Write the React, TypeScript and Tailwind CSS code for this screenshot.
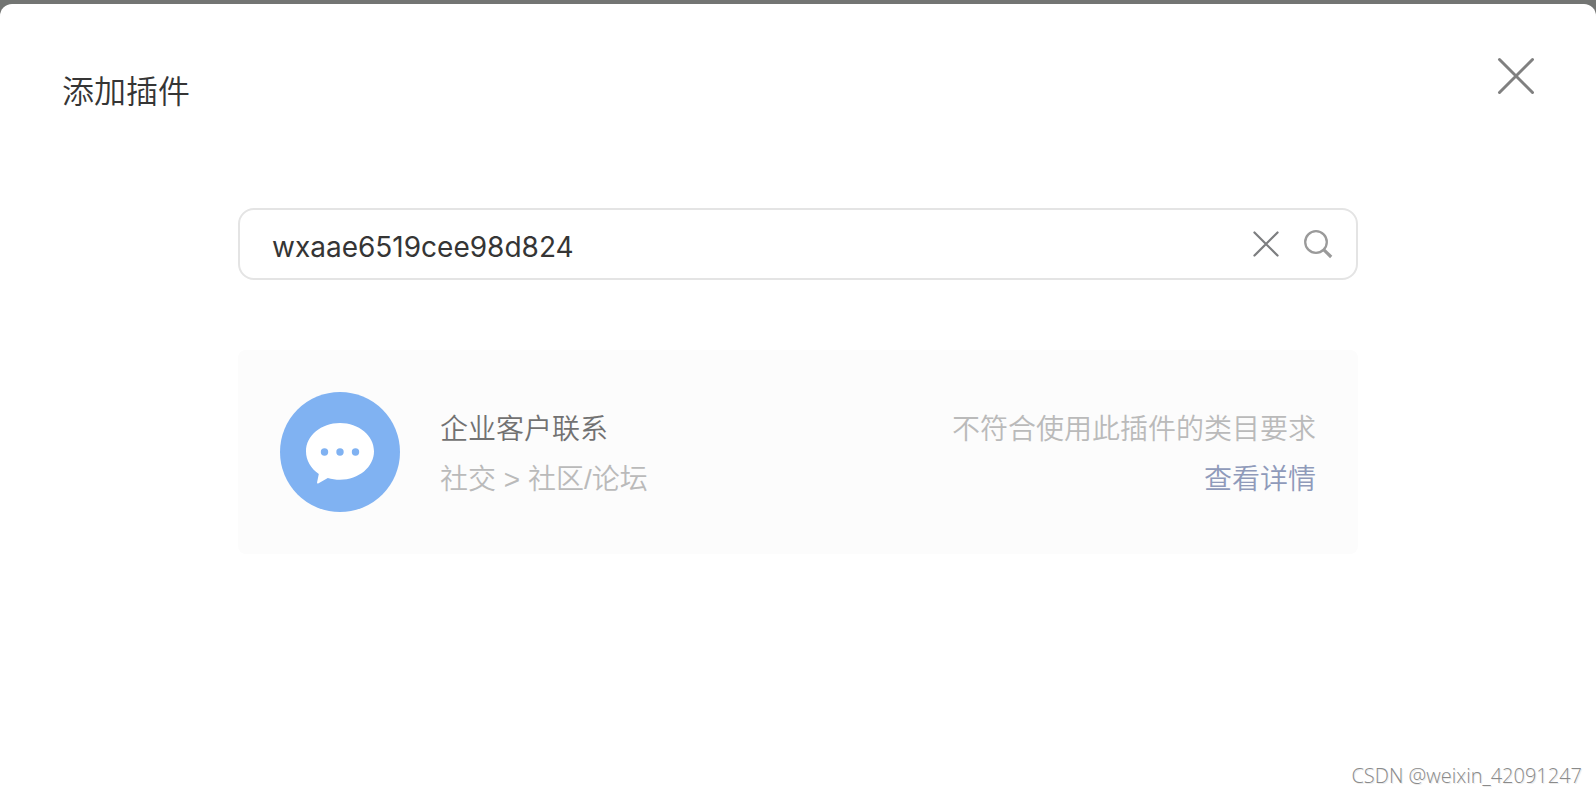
import React, { useState } from 'react';

interface Plugin {
  name: string;
  category: string;
  reason: string;
}

const plugin: Plugin = {
  name: '企业客户联系',
  category: '社交 > 社区/论坛',
  reason: '不符合使用此插件的类目要求'
};

const CloseIcon: React.FC<{ className?: string; strokeWidth: number }> = ({ className, strokeWidth }) => (
  <svg className={className} viewBox="0 0 40 40" fill="none" stroke="currentColor" strokeWidth={strokeWidth} strokeLinecap="round" aria-hidden="true">
    <path d="M3.5 3.5 36.5 36.5M36.5 3.5 3.5 36.5" />
  </svg>
);

const SearchIcon = () => (
  <svg className="size-8" viewBox="0 0 32 32" fill="none" stroke="currentColor" aria-hidden="true">
    <circle cx="14" cy="14" r="10.8" strokeWidth="2.3" />
    <path d="m21.6 21.6 7.6 7.4" strokeWidth="3.2" />
  </svg>
);

const PluginLogo = () => (
  <svg className="size-30 shrink-0" viewBox="0 0 120 120" aria-hidden="true">
    <circle cx="60" cy="60" r="60" fill="#80b2f2" />
    <path
      fill="#fff"
      d="M60 31c18.8 0 34 12.6 34 28.3S78.8 87.8 60 87.8c-4.3 0-8.4-.6-12.2-1.8L38.6 91.2c-1 .6-1.7.1-1.5-1l1.7-8.3C30.9 76.7 26 68.5 26 59.3 26 43.6 41.2 31 60 31Z"
    />
    <g fill="#80b2f2">
      <circle cx="44.5" cy="60" r="3.7" />
      <circle cx="60" cy="60" r="3.7" />
      <circle cx="75.5" cy="60" r="3.7" />
    </g>
  </svg>
);

const SearchBox = () => {
  const [keyword, setKeyword] = useState('wxaae6519cee98d824');

  return (
    <form
      className="flex h-18 items-center rounded-2xl border-2 border-[#e4e4e4] pl-8 pr-[22px]"
      onSubmit={(e) => e.preventDefault()}
    >
      <input
        type="text"
        aria-label="搜索插件"
        value={keyword}
        onChange={(e) => setKeyword(e.target.value)}
        className="min-w-0 flex-1 bg-transparent pt-[6px] font-['Inter','Noto_Sans_CJK_SC',sans-serif] text-[28px] font-normal text-[#353535] outline-none"
      />
      <button type="button" aria-label="清空" onClick={() => setKeyword('')} className="mr-[22px] text-[#7d7e80]">
        <CloseIcon className="size-7" strokeWidth={3.2} />
      </button>
      <button type="submit" aria-label="搜索" className="text-[#9a9a9a]">
        <SearchIcon />
      </button>
    </form>
  );
};

const PluginCard: React.FC<{ item: Plugin }> = ({ item }) => (
  <section className="flex items-center gap-10 rounded-lg bg-[#fcfcfc] p-[42px] text-[28px] leading-[50px]">
    <PluginLogo />
    <div className="flex-1 pt-[6px]">
      <h2 className="text-[#727272]">{item.name}</h2>
      <p className="text-[#bababa]">{item.category}</p>
    </div>
    <div className="pt-[6px] text-right">
      <p className="text-[#bababa]">{item.reason}</p>
      <a href="#detail" className="text-[#8f9aba]">查看详情</a>
    </div>
  </section>
);

export default function App() {
  return (
    <div className="flex min-h-screen flex-col bg-[#737573] pt-1 font-['Liberation_Sans','Noto_Sans_CJK_SC',sans-serif] font-[350]">
      <main className="flex flex-1 flex-col rounded-t-xl bg-white">
        <header className="flex items-start justify-between pl-[62px] pr-[60px] pt-[52px]">
          <h1 className="pt-[10px] text-[32px] leading-[52px] text-[#353535]">添加插件</h1>
          <button type="button" aria-label="关闭" className="text-[#808080]">
            <CloseIcon className="size-10" strokeWidth={3} />
          </button>
        </header>

        <div className="mx-auto mt-[90px] flex w-full max-w-[1120px] flex-col gap-[70px]">
          <SearchBox />
          <PluginCard item={plugin} />
        </div>

        <footer className="mt-auto pr-[14px] pb-[2px] text-right font-['Open_Sans',sans-serif] text-[20px] font-light leading-9 text-[#8a8a8a] [text-shadow:1px_1px_0_#ececec]">
          CSDN @weixin_42091247
        </footer>
      </main>
    </div>
  );
}
